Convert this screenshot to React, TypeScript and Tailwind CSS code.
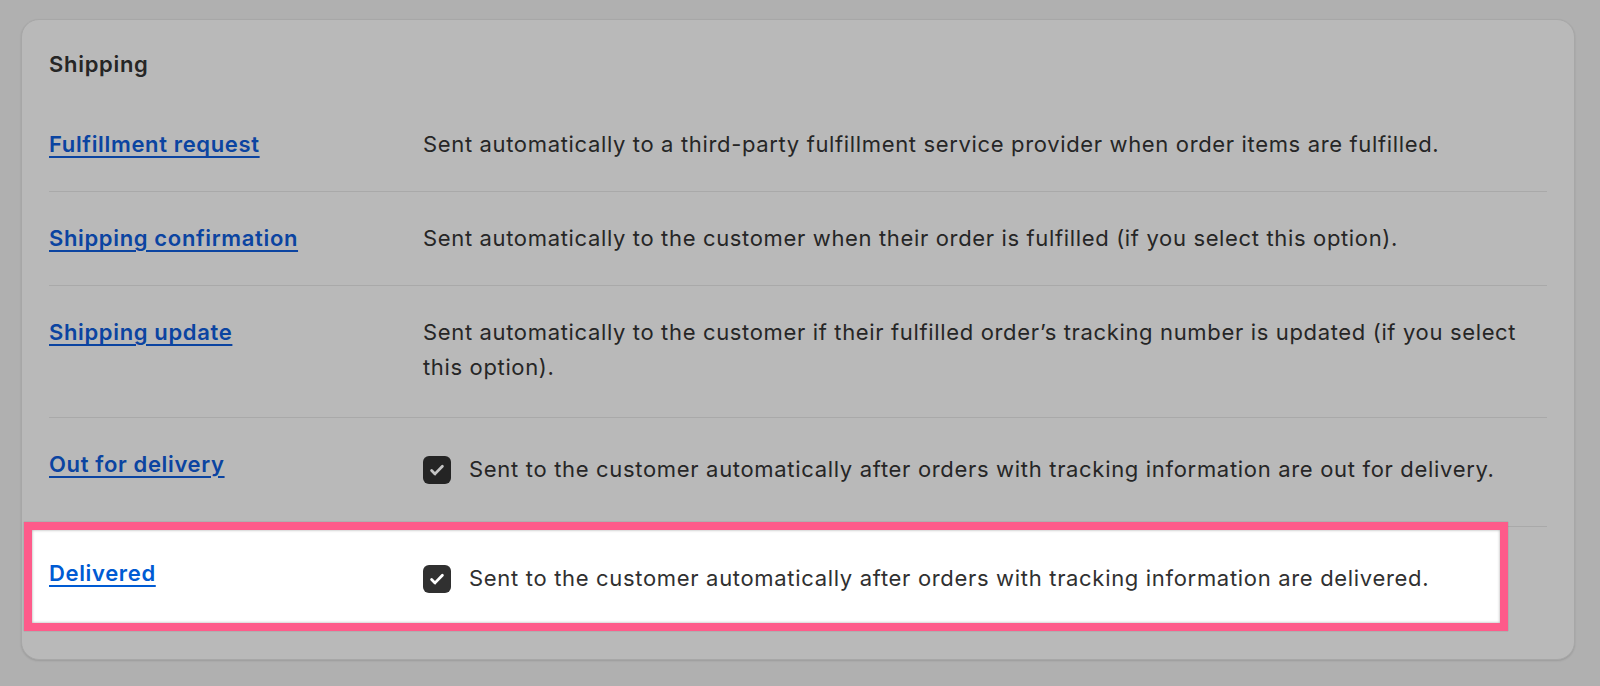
import React from "react";

type Row = {
  title: string;
  desc: string;
  checkbox?: boolean;
  highlight?: boolean;
};

const rows: Row[] = [
  {
    title: "Fulfillment request",
    desc: "Sent automatically to a third-party fulfillment service provider when order items are fulfilled.",
  },
  {
    title: "Shipping confirmation",
    desc: "Sent automatically to the customer when their order is fulfilled (if you select this option).",
  },
  {
    title: "Shipping update",
    desc: "Sent automatically to the customer if their fulfilled order\u2019s tracking number is updated (if you select this option).",
  },
  {
    title: "Out for delivery",
    desc: "Sent to the customer automatically after orders with tracking information are out for delivery.",
    checkbox: true,
  },
  {
    title: "Delivered",
    desc: "Sent to the customer automatically after orders with tracking information are delivered.",
    checkbox: true,
    highlight: true,
  },
];

function Check({ lit }: { lit?: boolean }) {
  return (
    <span
      className={`flex h-[28px] w-[28px] shrink-0 items-center justify-center rounded-[6px] ${
        lit ? "bg-[#303030]" : "bg-[#242424]"
      }`}
    >
      <svg width="18" height="18" viewBox="0 0 18 18" fill="none">
        <path
          d="M3.6 9.6l3.4 3.3L14.4 5.2"
          stroke={lit ? "#ffffff" : "#c4c4c4"}
          strokeWidth="2.8"
          strokeLinecap="round"
          strokeLinejoin="round"
        />
      </svg>
    </span>
  );
}

export default function App() {
  return (
    <div
      className="min-h-[686px] w-[1600px] bg-[#b0b0b0] pt-[19px] pl-[21px]"
      style={{ fontFamily: "Inter, 'Noto Sans', sans-serif" }}
    >
      <div className="w-[1554px] rounded-[18px] border border-[#a7a7a7] bg-[#b9b9b9] px-[27px] pt-[27px] pb-[24px] shadow-[0_1px_2px_rgba(0,0,0,0.12)]">
        <h2 className="text-[22px] leading-[34px] font-semibold tracking-[0.7px] text-[#262626]">Shipping</h2>

        <div className="mt-[17px]">
          {rows.map((r, i) => {
            const lit = r.highlight;
            return (
              <div
                key={r.title}
                className={`relative grid grid-cols-[374px_1fr] py-[29px] ${
                  i > 0 ? "border-t border-[#a9a9a9]" : ""
                } ${i === 2 ? "pb-[32px]" : ""}`}
              >
                {lit && (
                  <div className="absolute top-[-5px] left-[-25px] h-[109px] w-[1484px] border-[8px] border-[#fe5b8a] bg-white shadow-[inset_0_0_3px_rgba(0,0,0,0.35),0_0_1px_rgba(0,0,0,0.3)]" />
                )}
                <div className="relative z-10">
                  <a
                    href="#"
                    className={`text-[22px] leading-[35px] font-semibold tracking-[0.65px] underline decoration-[2px] underline-offset-[4px] ${
                      lit ? "text-[#005bd3]" : "text-[#0b44a1]"
                    }`}
                  >
                    {r.title}
                  </a>
                </div>
                {r.checkbox ? (
                  <div className="relative z-10 mt-[5px] mb-[10px] flex items-center gap-[18px]">
                    <Check lit={lit} />
                    <p
                      className={`text-[22px] leading-[35px] tracking-[0.68px] ${
                        lit ? "text-[#303030]" : "text-[#262626]"
                      }`}
                    >
                      {r.desc}
                    </p>
                  </div>
                ) : (
                  <p className="relative z-10 text-[22px] leading-[35px] tracking-[0.65px] text-[#262626]">{r.desc}</p>
                )}
              </div>
            );
          })}
        </div>
      </div>
    </div>
  );
}
